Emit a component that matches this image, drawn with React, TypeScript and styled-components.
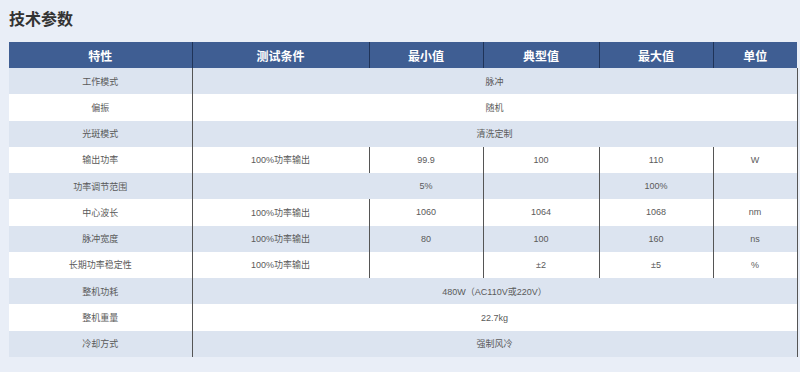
import React from 'react'
import styled, { createGlobalStyle } from 'styled-components'

const GlobalStyle = createGlobalStyle`
  html, body {
    margin: 0;
    padding: 0;
    background: #e9eef7;
  }
  body {
    font-family: "Liberation Sans", "Noto Sans CJK SC", sans-serif;
  }
`

const Page = styled.div`
  width: 800px;
  height: 372px;
  padding: 6px 0 0 9px;
  box-sizing: border-box;
  background: #e9eef7;
`

const Title = styled.h2`
  margin: 0 0 12px 0;
  height: 24px;
  line-height: 24px;
  font-size: 16px;
  font-weight: 700;
  color: #333;
  font-family: "Noto Sans CJK SC", sans-serif;
`

const Table = styled.table`
  width: 788px;
  table-layout: fixed;
  border-collapse: collapse;
  border-spacing: 0;
`

const HeadCell = styled.th`
  height: 26px;
  padding: 0;
  background: #3f5e93;
  color: #fff;
  font-size: 12px;
  font-weight: 700;
  text-align: center;
  font-family: "Noto Sans CJK SC", serif;
  border-right: 1px solid #1f3358;
  &:last-child {
    border-right: none;
  }
`

const Row = styled.tr<{ $striped: boolean }>`
  height: 26.27px;
  background: ${p => (p.$striped ? '#dce4f0' : '#ffffff')};
`

const Cell = styled.td<{ $noBorder?: boolean }>`
  padding: 0;
  text-align: center;
  font-size: 9px;
  color: #5a5a5a;
  font-family: "Liberation Sans", "Noto Sans CJK SC", sans-serif;
  border-right: 1px solid ${p => (p.$noBorder ? 'transparent' : '#555')};
`

type CellData = { text: string; span?: number; noBorder?: boolean }

const widths = [183, 177, 114, 116, 114, 84]
const headers = ['特性', '测试条件', '最小值', '典型值', '最大值', '单位']

const rows: CellData[][] = [
  [{ text: '工作模式' }, { text: '脉冲', span: 5 }],
  [{ text: '偏振' }, { text: '随机', span: 5 }],
  [{ text: '光斑模式' }, { text: '清洗定制', span: 5 }],
  [{ text: '输出功率' }, { text: '100%功率输出' }, { text: '99.9' }, { text: '100' }, { text: '110' }, { text: 'W' }],
  [{ text: '功率调节范围' }, { text: '', noBorder: true }, { text: '5%' }, { text: '' }, { text: '100%' }, { text: '' }],
  [{ text: '中心波长' }, { text: '100%功率输出' }, { text: '1060' }, { text: '1064' }, { text: '1068' }, { text: 'nm' }],
  [{ text: '脉冲宽度' }, { text: '100%功率输出' }, { text: '80' }, { text: '100' }, { text: '160' }, { text: 'ns' }],
  [{ text: '长期功率稳定性' }, { text: '100%功率输出' }, { text: '' }, { text: '±2' }, { text: '±5' }, { text: '%' }],
  [{ text: '整机功耗' }, { text: '480W（AC110V或220V）', span: 5 }],
  [{ text: '整机重量' }, { text: '22.7kg', span: 5 }],
  [{ text: '冷却方式' }, { text: '强制风冷', span: 5 }],
]

const App = () => {
  return (
    <Page>
      <GlobalStyle />
      <Title>技术参数</Title>
      <Table>
        <colgroup>
          {widths.map((w, i) => <col key={i} style={{ width: w }} />)}
        </colgroup>
        <thead>
          <tr>
            {headers.map(h => <HeadCell key={h}>{h}</HeadCell>)}
          </tr>
        </thead>
        <tbody>
          {rows.map((r, i) => (
            <Row key={i} $striped={i % 2 === 0}>
              {r.map((c, j) => (
                <Cell key={j} colSpan={c.span} $noBorder={c.noBorder}>{c.text}</Cell>
              ))}
            </Row>
          ))}
        </tbody>
      </Table>
    </Page>
  )
}

export default App
